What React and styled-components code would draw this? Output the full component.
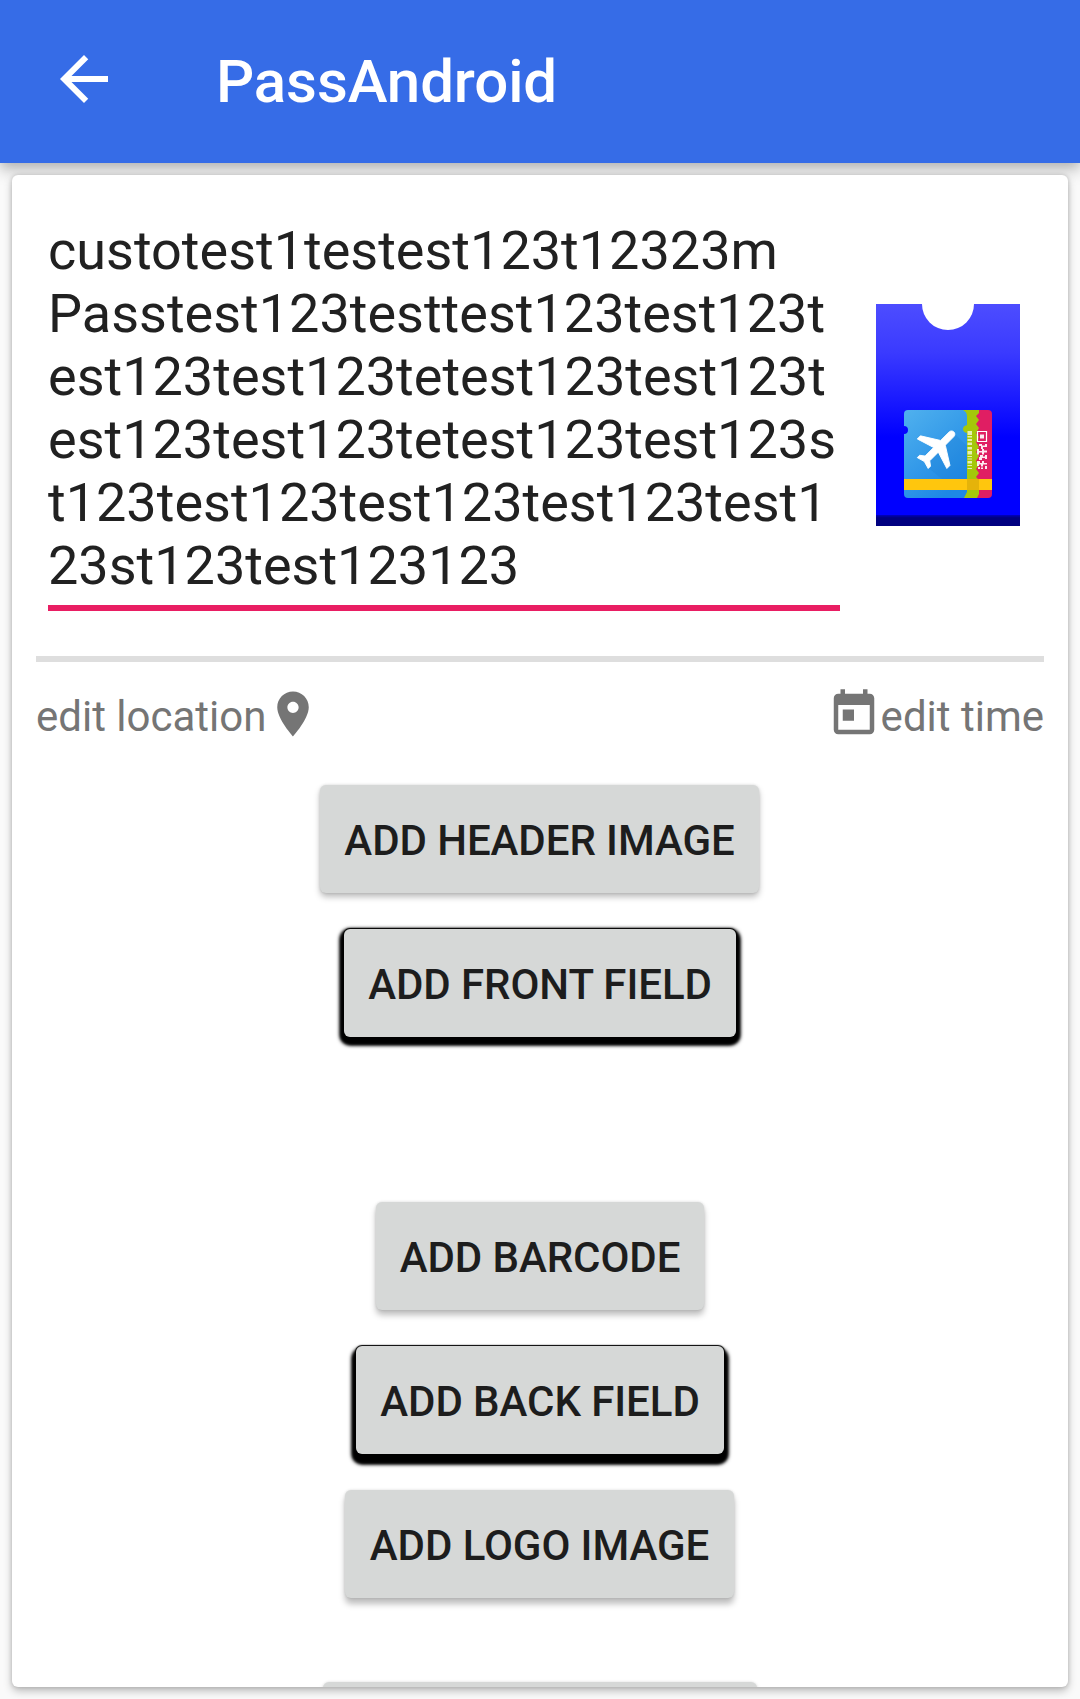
import React from "react";
import styled, { createGlobalStyle, css } from "styled-components";

const GlobalStyle = createGlobalStyle`
  html, body { margin: 0; height: 100%; overflow: hidden; background: #fafafa; }
  * { box-sizing: border-box; }
`;

const Screen = styled.div`
  width: 1080px;
  height: 1699px;
  display: flex;
  flex-direction: column;
  overflow: hidden;
  background: #fafafa;
  font-family: Roboto, sans-serif;
`;

const AppBar = styled.header`
  flex: none;
  height: 163px;
  display: flex;
  align-items: center;
  padding: 0 0 5px 48px;
  gap: 96px;
  background: #366ce7;
  box-shadow: 0 8px 14px rgba(0, 0, 0, 0.22), 0 1px 10px rgba(0, 0, 0, 0.1);
`;

const BackIcon = styled.svg`
  width: 72px;
  height: 72px;
  fill: #fff;
`;

const Title = styled.h1`
  margin: 6px 0 0;
  font-size: 60px;
  line-height: 70px;
  font-weight: 500;
  letter-spacing: -0.1px;
  color: #fff;
`;

const Card = styled.main`
  flex: none;
  height: 1512px;
  margin: 12px 12px 0;
  padding: 36px 24px 0;
  border-radius: 6px;
  background: #fff;
  overflow: hidden;
  box-shadow: 0 4px 9px rgba(0, 0, 0, 0.25), 0 0 4px rgba(0, 0, 0, 0.16);
`;

const PassHead = styled.section`
  display: flex;
  height: 445px;
  padding: 0 24px 0 12px;
  justify-content: space-between;
`;

const PassName = styled.div`
  width: 792px;
  height: 400px;
  padding-top: 8px;
  border-bottom: 6px solid #e91e63;
  font-size: 54px;
  line-height: 63px;
  color: #212121;
  white-space: pre;
`;

const PassArt = styled.svg`
  width: 144px;
  height: 222px;
  margin-top: 93px;
`;

const Divider = styled.hr`
  height: 6px;
  margin: 0;
  border: 0;
  background: #dedede;
`;

const Meta = styled.section`
  display: flex;
  justify-content: space-between;
  height: 123px;
  padding-top: 25px;
`;

const MetaItem = styled.div`
  display: flex;
  height: 56px;
  font-size: 42px;
  line-height: 60px;
  color: #757575;
`;

const MetaIcon = styled.svg`
  width: 54px;
  height: 54px;
  fill: #757575;
`;

const Actions = styled.section`
  display: flex;
  flex-direction: column;
  align-items: center;
`;

const Button = styled.button`
  flex: none;
  width: ${(p) => p.$width}px;
  height: 108px;
  margin: 0 ${(p) => p.$width % 2}px ${(p) => p.$after ?? 36}px 0;
  padding: 0;
  border: 0;
  border-radius: 6px;
  background: #d6d8d7;
  color: #1d1d1d;
  font: 500 42px/112px Roboto, sans-serif;
  letter-spacing: -0.07px;
  text-transform: uppercase;
  white-space: nowrap;
  box-shadow: 0 ${(p) => p.$drop}px 6px rgba(0, 0, 0, 0.26), 0 0 3px rgba(0, 0, 0, 0.14);
  ${(p) => p.$heavy && css`
    box-shadow: 0 ${p.$drop}px 4px 4px #000, 0 ${p.$drop}px 3px 4px #000, 0 0 1px 1px #000;
  `}
`;

const NAME_LINES = [
  "custotest1testest123t12323m",
  "Passtest123testtest123test123t",
  "est123test123tetest123test123t",
  "est123test123tetest123test123s",
  "t123test123test123test123test1",
  "23st123test123123",
];

const ACTIONS = [
  { label: "Add header image", width: 439, drop: 4 },
  { label: "Add front field", width: 392, heavy: true, drop: 4, after: 165 },
  { label: "Add barcode", width: 328, drop: 5 },
  { label: "Add back field", width: 368, heavy: true, drop: 6 },
  { label: "Add logo image", width: 389, drop: 6, after: 84 },
  { width: 434, drop: 6 },
];

function PassPicture() {
  return (
    <PassArt viewBox="0 0 144 222">
      <defs>
        <linearGradient id="body" x1="0" y1="0" x2="0" y2="1">
          <stop offset="0" stopColor="#4d4dff" />
          <stop offset="0.22" stopColor="#3a3aff" />
          <stop offset="0.6" stopColor="#0000ff" />
          <stop offset="1" stopColor="#0000ff" />
        </linearGradient>
        <linearGradient id="sky" x1="0" y1="0" x2="0.6" y2="1">
          <stop offset="0" stopColor="#50b1ee" />
          <stop offset="1" stopColor="#1e88e5" />
        </linearGradient>
        <linearGradient id="foot" x1="0" y1="0" x2="0" y2="1">
          <stop offset="0" stopColor="#0000c0" />
          <stop offset="0.25" stopColor="#000080" />
          <stop offset="1" stopColor="#000080" />
        </linearGradient>
        <clipPath id="ticket"><rect x="28" y="106" width="88" height="88" rx="4" /></clipPath>
      </defs>
      <path d="M0 0H46A26 26 0 0 0 98 0H144V222H0Z" fill="url(#body)" />
      <rect y="211" width="144" height="11" fill="url(#foot)" />
      <g clipPath="url(#ticket)">
        <rect x="80" y="106" width="36" height="88" fill="#e01e63" />
        <path d="M80 106H103V109L100 112L103 116L100 120L103 124L100 129L103 133L100 138L103 143L100 148L103 152L100 157L103 161L100 165L103 169L100 173L103 176V190L101 194H80Z" fill="#a4c80a" />
        <path d="M28 106H87Q91 108 91 112V121Q87 122 87 125Q87 128 91 129V188L88 194H28V130A4 4 0 0 0 28 122Z" fill="url(#sky)" />
        <path d="M78 129L91 142V175H66L50 162Z" fill="#1878cc" opacity="0.2" />
        <rect x="28" y="175" width="88" height="11" fill="#ffc60d" />
        <path d="M91 175H103V186H91Z" fill="#e5b30a" />
      </g>
      <path transform="translate(62.3 143.5) rotate(45) scale(2.2) translate(-11.5 -12)" d="M21 16v-2l-8-5V3.500c0-.83-.67-1.500-1.500-1.500S10 2.670 10 3.500V9l-8 5v2l8-2.500V19l-2 1.500V22l3.500-1 3.500 1v-1.500L13 19v-5.500l8 2.500z" fill="#fff" stroke="#fff" strokeWidth="0.4" strokeLinejoin="round" />
      <path d="M91.500 127h4.500v4h-4.500zM91.500 132h4.500v1.500h-4.500zM91.500 135h4.500v2h-4.500zM91.500 138.500h4.500v2.500h-4.500zM91.500 143h4.500v2.500h-4.500zM91.500 147h4.500v3.500h-4.500zM91.500 152h4.500v1h-4.500zM91.500 154.500h4.500v1h-4.500zM91.500 157h4.500v2.500h-4.500zM91.500 161h4.500v1h-4.500zM91.500 164h4.500v1h-4.500z" fill="#e4eeb4" />
      <path d="M101.500 127.500h9v10h-9z" fill="none" stroke="#fff" strokeWidth="1.200" />
      <path d="M104 130.500h4v4h-4zM103 140h3v1.500h3v-1.500h2v3h-4v2h-2v-3h-2zM101 145h2v2h3v-2h2v1.500h3v2h-3v2h-2v-2h-3v2h-2zM104 151h3v1.500h2v-1.500h2v4h-2v-1h-3v2h-3v-3h1zM101 157h3v2h2v-2h2v2h3v1.500h-4v2h-2v-2h-2v1.500h-2zM102 163h2v2h-2zM105 163.500h2v1.500h-2zM109 162h2v3h-2z" fill="#fff" opacity="0.9" />
    </PassArt>
  );
}

export default function App() {
  return (
    <Screen>
      <GlobalStyle />
      <AppBar>
        <BackIcon viewBox="0 0 24 24"><path d="M20 11H7.830l5.590-5.590L12 4l-8 8 8 8 1.410-1.410L7.830 13H20v-2z" /></BackIcon>
        <Title>PassAndroid</Title>
      </AppBar>
      <Card>
        <PassHead>
          <PassName>{NAME_LINES.join("\n")}</PassName>
          <PassPicture />
        </PassHead>
        <Divider />
        <Meta>
          <MetaItem>
            edit location
            <MetaIcon viewBox="0 0 24 24"><path d="M12 2C8.130 2 5 5.130 5 9c0 5.250 7 13 7 13s7-7.750 7-13c0-3.870-3.130-7-7-7zm0 9.500c-1.380 0-2.500-1.120-2.500-2.500s1.120-2.500 2.500-2.500 2.500 1.120 2.500 2.500-1.120 2.500-2.500 2.500z" /></MetaIcon>
          </MetaItem>
          <MetaItem>
            <MetaIcon viewBox="0 0 24 24"><path d="M19 3h-1V1h-2v2H8V1H6v2H5c-1.110 0-1.990.9-1.990 2L3 19c0 1.100.89 2 2 2h14c1.100 0 2-.9 2-2V5c0-1.100-.9-2-2-2zm0 16H5V8h14v11zM7 10h5v5H7z" /></MetaIcon>
            edit time
          </MetaItem>
        </Meta>
        <Actions>
          {ACTIONS.map((a, i) => (
            <Button key={i} $width={a.width} $heavy={a.heavy} $drop={a.drop} $after={a.after}>{a.label}</Button>
          ))}
        </Actions>
      </Card>
    </Screen>
  );
}
